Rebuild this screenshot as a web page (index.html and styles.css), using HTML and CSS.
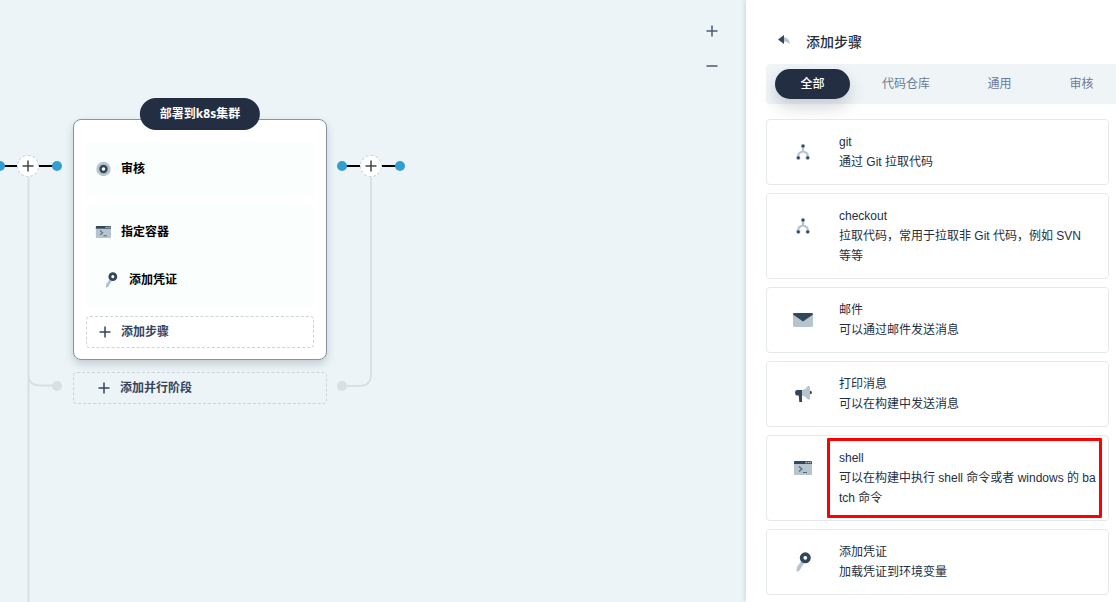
FILE: index.html
```
<!DOCTYPE html>
<html lang="zh-CN">
<head>
<meta charset="utf-8">
<title>添加步骤</title>
<link rel="stylesheet" href="styles.css">
</head>
<body>
<svg class="defs" aria-hidden="true">
  <symbol id="plus" viewBox="0 0 12 12"><path d="M6 0.5v11M0.5 6h11" fill="none" stroke="currentColor" stroke-width="1.5"/></symbol>
  <symbol id="branch" viewBox="0 0 24 24">
    <path d="M12 6v5.500M7.300 18v-2.700q0-1.700 1.600-2.500l3.100-1.600 3.100 1.600q1.600.8 1.600 2.500V18" fill="none" stroke="#b6c4ce" stroke-width="2.200"/>
    <circle cx="12" cy="6" r="2.200" fill="#b6c4ce"/><circle cx="7.300" cy="17.800" r="2.200" fill="#b6c4ce"/><circle cx="16.700" cy="17.800" r="2.200" fill="#b6c4ce"/>
    <circle cx="12" cy="6" r="1.500" fill="#33475a"/><circle cx="7.300" cy="17.800" r="1.500" fill="#33475a"/><circle cx="16.700" cy="17.800" r="1.500" fill="#33475a"/>
  </symbol>
  <symbol id="terminal" viewBox="0 0 24 24">
    <path d="M3 8h18v10a1 1 0 0 1-1 1H4a1 1 0 0 1-1-1z" fill="#b6c4ce"/>
    <path d="M3 8V6a1 1 0 0 1 1-1h16a1 1 0 0 1 1 1v2z" fill="#33475a"/>
    <path d="M14.500 6.500h6" stroke="#b6c4ce" stroke-width="1.300" stroke-dasharray="1.500 .6"/>
    <path d="M8 10.500l3 2.500-3 2.500M12 16.500h4" fill="none" stroke="#54687a" stroke-width="1.200"/>
  </symbol>
  <symbol id="key" viewBox="0 0 24 24">
    <path d="M10.200 11l3 2-3.300 5-.8 2-2.600 1.800-1-.6.300-3.800z" fill="#b6c4ce"/>
    <circle cx="14.300" cy="7.800" r="3.700" fill="#fff" stroke="#33475a" stroke-width="3.600"/>
  </symbol>
</svg>
<div class="app">
  <main class="canvas">
    <svg class="links" aria-hidden="true">
      <g fill="none" stroke="#d9e0e4" stroke-width="2">
        <path d="M28.500 166V3000M28.500 374q0 11.500 11.500 11.500h17M371 166v208q0 12-12 12h-17"/>
      </g>
      <path d="M0 166h57M342 166h58" stroke="#000" stroke-width="2"/>
      <g fill="#339fd0"><circle cx="0" cy="166" r="5"/><circle cx="57" cy="166" r="5"/><circle cx="342" cy="166" r="5"/><circle cx="400" cy="166" r="5"/></g>
      <g fill="#d9e0e4"><circle cx="57" cy="386" r="5"/><circle cx="342" cy="386" r="5"/></g>
    </svg>
    <button class="insert insert-before" aria-label="在前面添加阶段"><svg width="12" height="12"><use href="#plus"/></svg></button>
    <button class="insert insert-after" aria-label="在后面添加阶段"><svg width="12" height="12"><use href="#plus"/></svg></button>

    <div class="node">
      <section class="stage">
        <h2 class="stage-name">部署到k8s集群</h2>
        <div class="step">
          <div class="step-row">
            <svg width="16" height="16" viewBox="0 0 16 16"><circle cx="8.500" cy="8" r="7.200" fill="#b6c4ce"/><circle cx="8.500" cy="8" r="3" fill="#fff" stroke="#33475a" stroke-width="2.400"/></svg>
            <span>审核</span>
          </div>
        </div>
        <div class="step">
          <div class="step-row">
            <svg width="16" height="16" viewBox="2 3 19 18"><use href="#terminal" width="24" height="24"/></svg>
            <span>指定容器</span>
          </div>
          <div class="step-row child">
            <svg width="16" height="16" viewBox="2 2 20 20"><use href="#key" width="24" height="24"/></svg>
            <span>添加凭证</span>
          </div>
        </div>
        <button class="add"><svg width="12" height="12"><use href="#plus"/></svg>添加步骤</button>
      </section>
      <button class="add"><svg width="12" height="12"><use href="#plus"/></svg>添加并行阶段</button>
    </div>

    <div class="zoom">
      <button aria-label="放大"><svg width="12" height="12"><use href="#plus"/></svg></button>
      <button aria-label="缩小"><svg width="12" height="12" viewBox="0 0 12 12"><path d="M0.500 6h11" stroke="currentColor" stroke-width="1.500"/></svg></button>
    </div>
  </main>

  <aside class="panel">
    <header class="panel-head">
      <button class="back" aria-label="返回"><svg width="12" height="10" viewBox="0 0 12 10"><path d="M5 2.300c4 0 6.500 2.400 7 7-2-2.300-4-3-7-2.800z" fill="#b6c4ce"/><path d="M6 0v9L0 4.500z" fill="#33475a"/></svg></button>
      <h1>添加步骤</h1>
    </header>
    <nav class="tabs">
      <button class="tab active">全部</button>
      <button class="tab">代码仓库</button>
      <button class="tab">通用</button>
      <button class="tab">审核</button>
    </nav>
    <ul class="list">
      <li class="card"><svg class="icon"><use href="#branch"/></svg><div class="info"><h3>git</h3><p>通过 Git 拉取代码</p></div></li>
      <li class="card"><svg class="icon"><use href="#branch"/></svg><div class="info"><h3>checkout</h3><p>拉取代码，常用于拉取非 Git 代码，例如 SVN 等等</p></div></li>
      <li class="card"><svg class="icon" viewBox="0 0 24 24"><path d="M2 5h20v12.500a1.500 1.500 0 0 1-1.500 1.500h-17A1.500 1.500 0 0 1 2 17.500z" fill="#b6c4ce"/><path d="M2 6.500A1.500 1.500 0 0 1 3.500 5h17A1.500 1.500 0 0 1 22 6.500L12 13.500z" fill="#33475a"/></svg><div class="info"><h3>邮件</h3><p>可以通过邮件发送消息</p></div></li>
      <li class="card"><svg class="icon" viewBox="0 0 24 24"><path d="M19 8.700q2 .3 2 1.800t-2 1.800zM11 8v12H8.300L7.700 13.500H6Q4 13 4 10.500T6 8z" fill="#33475a"/><path d="M11 8q4-.8 6-4h1a1 1 0 0 1 1 1v11.500a1 1 0 0 1-1 1h-1q-2-3-6-4z" fill="#b6c4ce"/></svg><div class="info"><h3>打印消息</h3><p>可以在构建中发送消息</p></div></li>
      <li class="card marked"><svg class="icon"><use href="#terminal"/></svg><div class="info"><h3>shell</h3><p>可以在构建中执行 shell 命令或者 windows 的 batch 命令</p></div></li>
      <li class="card"><svg class="icon"><use href="#key"/></svg><div class="info"><h3>添加凭证</h3><p>加载凭证到环境变量</p></div></li>
    </ul>
  </aside>
</div>
</body>
</html>
```

FILE: styles.css
```
* { box-sizing: border-box; }

body,
button {
  font-family: "Liberation Sans", "Noto Sans CJK SC", sans-serif;
  font-size: 12px;
  line-height: 20px;
  color: #242e42;
}

body { margin: 0; overflow: hidden; }
h1, h2, h3, p, ul { margin: 0; padding: 0; }
svg { flex: none; }
button { border: 0; padding: 0; background: none; cursor: pointer; }
.defs { position: absolute; width: 0; height: 0; }

.app { display: flex; height: 100vh; }

/* Pipeline canvas */
.canvas {
  position: relative;
  flex: 1;
  min-width: 0;
  overflow: hidden;
  background: #ecf4f7;
}

.links { position: absolute; inset: 0; width: 100%; height: 100%; }

.insert {
  position: absolute;
  top: 155px;
  width: 22px;
  height: 22px;
  display: grid;
  place-items: center;
  border-radius: 50%;
  border: 1px dashed #ccd3db;
  background: #fff;
  color: #444;
}
.insert-before { left: 17px; }
.insert-after { left: 360px; }

.node {
  position: absolute;
  left: 73px;
  top: 119px;
  width: 254px;
  display: flex;
  flex-direction: column;
  gap: 12px;
}

.stage {
  position: relative;
  display: flex;
  flex-direction: column;
  gap: 9px;
  padding: 22px 12px 11px;
  border: 1px solid #8592ac;
  border-radius: 8px;
  background: #fff;
  box-shadow: 0 4px 8px rgba(36, 46, 66, 0.2);
}

.stage-name {
  position: absolute;
  top: -22px;
  left: 50%;
  transform: translateX(-50%);
  padding: 0 20px;
  border-radius: 16px;
  background: #242e42;
  color: #fff;
  font-family: "Open Sans", "Noto Sans CJK SC", sans-serif;
  font-size: 12px;
  line-height: 32px;
  white-space: nowrap;
}

.step {
  padding: 3px 9px;
  background: #fafffe;
  color: #000;
  font-weight: bold;
}
.step-row { display: flex; align-items: center; gap: 10px; height: 48px; }
.step-row.child { padding-left: 8px; }

.add {
  display: flex;
  align-items: center;
  gap: 10px;
  height: 32px;
  padding: 0 12px;
  border: 1px dashed #ccd3db;
  border-radius: 4px;
  color: #36435c;
  font-weight: bold;
}
.node > .add { padding: 0 24px; }

.zoom {
  position: absolute;
  top: 19px;
  right: 22px;
  display: grid;
  gap: 11px;
}
.zoom button {
  width: 24px;
  height: 24px;
  display: grid;
  place-items: center;
  color: #4a5974;
}

/* Step picker */
.panel {
  position: relative;
  flex: none;
  width: 370px;
  padding-left: 20px;
  overflow: hidden;
  background: #fff;
  box-shadow: 0 0 6px rgba(36, 46, 66, 0.2);
}

.panel-head {
  display: flex;
  align-items: center;
  gap: 16px;
  height: 64px;
  padding: 20px 12px 0;
}
.panel-head h1 { font-size: 14px; font-weight: 500; }
.back { display: flex; padding-bottom: 4px; }

.tabs {
  display: flex;
  align-items: center;
  gap: 7px;
  height: 40px;
  padding-left: 9px;
  border-radius: 4px 0 0 4px;
  background: #eff4f7;
}
.tab {
  flex: none;
  min-width: 75px;
  padding: 5px 25px;
  border-radius: 15px;
  color: #6b7a99;
}
.tab.active {
  background: #242e42;
  color: #fff;
  font-weight: 500;
  box-shadow: 0 8px 16px rgba(36, 46, 66, 0.2);
}

.list {
  display: flex;
  flex-direction: column;
  gap: 8px;
  padding: 15px 7px 0 0;
  list-style: none;
}

.card {
  position: relative;
  display: flex;
  align-items: flex-start;
  gap: 24px;
  padding: 12px 12px 12px 24px;
  border: 1px solid #e4e9ec;
  border-radius: 4px;
}
.icon { width: 24px; height: 24px; margin-top: 8px; }
.info { flex: 1; min-width: 0; word-break: break-all; }
.info h3 { font-size: 12px; font-weight: normal; }

.marked::after {
  content: "";
  position: absolute;
  inset: 2px 6px 2px 60px;
  border: 3px solid #f00;
  border-radius: 1px;
  pointer-events: none;
}
```
